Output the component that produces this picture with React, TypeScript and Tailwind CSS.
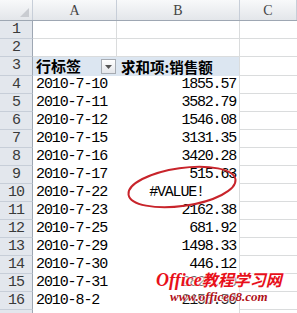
import React from 'react';

const data: [string, string][] = [
  ['2010-7-10', '1855.57'],
  ['2010-7-11', '3582.79'],
  ['2010-7-12', '1546.08'],
  ['2010-7-15', '3131.35'],
  ['2010-7-16', '3420.28'],
  ['2010-7-17', '515.63'],
  ['2010-7-22', '#VALUE!'],
  ['2010-7-23', '2162.38'],
  ['2010-7-25', '681.92'],
  ['2010-7-29', '1498.33'],
  ['2010-7-30', '446.12'],
  ['2010-7-31', '2823.80'],
  ['2010-8-2', '2156.50'],
];

const mono = "font-['Liberation_Mono','DejaVu_Sans_Mono',monospace]";
const cjk = "font-['Noto_Sans_CJK_SC',sans-serif]";

function RowHead({ n }: { n?: number }) {
  return (
    <div
      className={`flex w-[33px] shrink-0 items-center justify-center border-r border-b border-r-[#9ea7b3] border-b-[#c7ced8] bg-[#e3e7ed] pt-[1px] text-[15px] tracking-[-1px] text-[#3a3a3a] ${mono}`}
    >
      {n}
    </div>
  );
}

function Dropdown() {
  return (
    <div className="mr-[1px] flex h-[15px] w-[15px] items-center justify-center border border-[#a6abb2] bg-gradient-to-b from-white to-[#e4e6ea]">
      <svg width="7" height="4" viewBox="0 0 7 4">
        <path d="M0 0 H7 L3.5 4 Z" fill="#555" />
      </svg>
    </div>
  );
}

export default function App() {
  return (
    <div className="relative h-[313px] w-[297px] overflow-hidden bg-white">
      {/* column headers */}
      <div className="flex h-[21px] border-b border-[#9ea7b3] bg-gradient-to-b from-[#f8f9fa] to-[#e3e6ea]">
        <div className="relative w-[33px] shrink-0 border-r border-[#c7ced8]">
          <svg className="absolute right-[3px] bottom-[3px]" width="9" height="9" viewBox="0 0 9 9">
            <path d="M9 0 V9 H0 Z" fill="#c9ccd1" />
          </svg>
        </div>
        {[
          ['A', 'w-[84px]'],
          ['B', 'w-[123px]'],
          ['C', 'flex-1'],
        ].map(([l, w]) => (
          <div
            key={l}
            className={`${w} flex shrink-0 items-center justify-center border-r border-[#c7ced8] font-['Liberation_Serif',serif] text-[14px] text-[#444]`}
          >
            {l}
          </div>
        ))}
      </div>

      {/* rows 1-2 */}
      {[1, 2].map((n) => (
        <div key={n} className="flex h-[18px]">
          <RowHead n={n} />
          <div className="w-[84px] shrink-0 border-r border-b border-[#dadcdd]" />
          <div className="w-[123px] shrink-0 border-r border-b border-[#dadcdd]" />
          <div className="flex-1 border-b border-[#dadcdd]" />
        </div>
      ))}

      {/* row 3: pivot header */}
      <div className="flex h-[19px]">
        <RowHead n={3} />
        <div
          className={`flex w-[84px] shrink-0 items-center justify-between bg-[#dce6f1] pl-[3px] text-[15px] font-bold text-black ${cjk}`}
        >
          <span>行标签</span>
          <Dropdown />
        </div>
        <div
          className={`flex w-[123px] shrink-0 items-center border-r border-[#dadcdd] bg-[#dce6f1] pl-[4px] text-[14.5px] font-bold text-black ${cjk}`}
        >
          求和项:销售额
        </div>
        <div className="flex-1 border-b border-[#dadcdd]" />
      </div>

      {/* data rows */}
      {data.map(([d, v], i) => (
        <div key={d} className="flex h-[18px]">
          <RowHead n={i + 4} />
          <div
            className={`flex w-[84px] shrink-0 items-center pt-[1px] pl-[3px] text-[15px] tracking-[-1.1px] text-black ${mono}`}
          >
            {d}
          </div>
          <div
            className={`flex w-[123px] shrink-0 items-center border-r border-[#dadcdd] pt-[1px] pr-[3px] text-[15px] tracking-[-1.2px] text-black ${mono} ${
              v.startsWith('#') ? 'justify-center' : 'justify-end'
            }`}
          >
            {v}
          </div>
          <div className="flex-1 border-b border-[#dadcdd]" />
        </div>
      ))}

      <div className="flex h-[18px]">
        <RowHead />
        <div className="w-[84px] shrink-0" />
        <div className="w-[123px] shrink-0 border-r border-[#dadcdd]" />
        <div className="flex-1" />
      </div>

      {/* red hand-drawn ellipse */}
      <svg className="absolute left-[124px] top-[162px]" width="116" height="50" viewBox="0 0 116 50">
        <ellipse
          cx="58"
          cy="25"
          rx="54"
          ry="19"
          transform="rotate(-8 58 25)"
          fill="none"
          stroke="#c8242b"
          strokeWidth="2"
        />
      </svg>

      {/* watermark */}
      <div className="absolute left-[156px] top-[271px] flex flex-col items-center leading-none">
        <div
          className={`text-[16px] font-bold italic text-[#e8101a] [text-shadow:0_0_2px_#fff,0_0_3px_#fff,0_0_4px_#fff,0_0_5px_#fff] ${cjk}`}
        >
          <span className="font-['Liberation_Serif',serif] text-[18px]">Office</span>教程学习网
        </div>
        <div className="mt-[1px] font-['Liberation_Serif',serif] text-[13px] font-bold italic text-[#b01018] [text-shadow:0_0_2px_#fff,0_0_3px_#fff,0_0_4px_#fff]">
          www.office68.com
        </div>
      </div>
    </div>
  );
}
